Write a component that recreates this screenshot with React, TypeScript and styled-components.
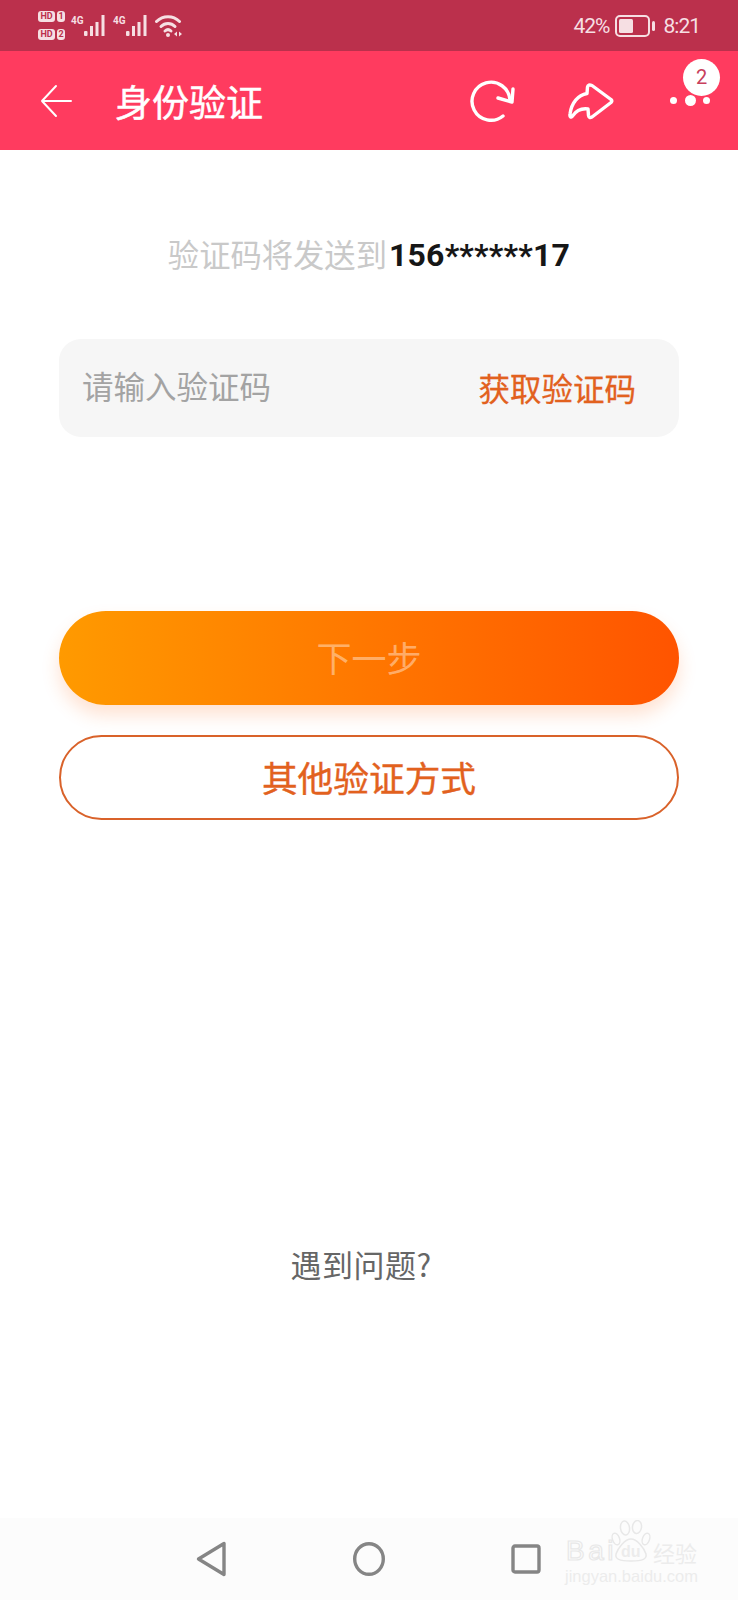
import styled, { createGlobalStyle } from 'styled-components';

const CJK = `'Noto Sans CJK SC', 'Noto Sans', sans-serif`;

const Global = createGlobalStyle`
  html, body {
    margin: 0;
    padding: 0;
    background: #fff;
    font-family: ${CJK};
  }
  * {
    box-sizing: border-box;
  }
`;

const St = {
  Page: styled.div`
    width: 738px;
    height: 1600px;
    display: flex;
    flex-direction: column;
    position: relative;
    overflow: hidden;
    background: #fff;
  `,

  StatusBar: styled.div`
    height: 51px;
    flex: none;
    background: #bb304c;
    display: flex;
    align-items: center;
    justify-content: space-between;
    padding: 0 38px;
    color: #f6dfe3;
  `,
  StatusLeft: styled.div`
    display: flex;
    align-items: center;
    height: 100%;
  `,
  SimColumn: styled.div`
    display: flex;
    flex-direction: column;
    gap: 6px;
    margin-right: 6px;
  `,
  SimRow: styled.div`
    display: flex;
    align-items: center;
    gap: 2px;
    height: 12px;
  `,
  SimTag: styled.span<{ $wide?: boolean }>`
    width: ${(p) => (p.$wide ? 17 : 8)}px;
    height: 11px;
    border-radius: 3px;
    background: #f6dfe3;
    color: #bb304c;
    font-family: Roboto, sans-serif;
    font-weight: 700;
    font-size: 9px;
    line-height: 11px;
    text-align: center;
  `,
  StatusRight: styled.div`
    display: flex;
    align-items: center;
    font-family: Roboto, sans-serif;
    font-size: 21px;
    letter-spacing: -1px;
    line-height: 26px;
  `,
  Percent: styled.span`
    margin-right: 5px;
  `,
  Clock: styled.span`
    margin-left: 8px;
  `,
  Network: styled.div`
    display: flex;
    align-items: flex-start;
    width: 36px;
    margin-right: 6px;
    svg {
      display: block;
    }
  `,
  NetworkLabel: styled.span`
    width: 13px;
    font-family: Roboto, sans-serif;
    font-weight: 700;
    font-size: 10px;
    line-height: 12px;
  `,

  Header: styled.div`
    height: 99px;
    flex: none;
    background: #ff3b5f;
    display: flex;
    align-items: center;
    color: #fff;
    padding-left: 40px;
  `,
  BackButton: styled.div`
    width: 32px;
    height: 34px;
    margin-right: 43px;
    svg {
      display: block;
    }
  `,
  Title: styled.div`
    font-size: 37px;
    -webkit-text-stroke: 0.5px #fff;
    line-height: 50px;
    width: 148px;
    margin-right: 207px;
    white-space: nowrap;
  `,
  IconButton: styled.div<{ $gap: number }>`
    margin-right: ${(p) => p.$gap}px;
    svg {
      display: block;
    }
  `,
  More: styled.div`
    position: relative;
    width: 40px;
    height: 12px;
    display: flex;
    align-items: center;
    justify-content: space-between;
    margin-left: 3px;
  `,
  Dot: styled.span<{ $big?: boolean }>`
    width: ${(p) => (p.$big ? 11 : 7)}px;
    height: ${(p) => (p.$big ? 11 : 7)}px;
    border-radius: 50%;
    background: #fff;
  `,
  Badge: styled.span`
    position: absolute;
    right: -10px;
    top: -36px;
    width: 37px;
    height: 37px;
    border-radius: 50%;
    background: #fff;
    color: #c8405c;
    font-family: Roboto, sans-serif;
    font-size: 20px;
    line-height: 37px;
    text-align: center;
  `,

  Main: styled.div`
    flex: 1;
    display: flex;
    flex-direction: column;
    padding: 85px 59px 0;
  `,
  Prompt: styled.div`
    height: 40px;
    display: flex;
    justify-content: center;
    align-items: center;
    font-size: 31.3px;
    color: #c9c9c9;
    white-space: nowrap;
  `,
  PromptLead: styled.span`
    padding-bottom: 4px;
  `,
  Phone: styled.span`
    margin-left: 2px;
    font-family: Roboto, sans-serif;
    font-weight: 700;
    font-size: 32px;
    letter-spacing: 0.2px;
    color: #161616;
  `,
  CodeField: styled.div`
    margin-top: 64px;
    height: 98px;
    background: #f6f6f6;
    border-radius: 22px;
    display: flex;
    align-items: center;
    justify-content: space-between;
    padding: 0 43px 6px 23px;
    font-size: 31.5px;
  `,
  Placeholder: styled.span`
    color: #a3a3a3;
  `,
  GetCode: styled.span`
    color: #e2611e;
    -webkit-text-stroke: 0.3px #e2611e;
    margin-top: 3px;
  `,
  NextButton: styled.div`
    margin-top: 174px;
    height: 94px;
    border-radius: 47px;
    background: linear-gradient(90deg, #ff9a00 0%, #ff5400 100%);
    box-shadow: 0 10px 18px rgba(255, 110, 30, 0.2);
    display: flex;
    align-items: center;
    justify-content: center;
    padding-bottom: 3px;
    font-size: 35px;
    color: rgba(255, 255, 255, 0.42);
  `,
  OtherButton: styled.div`
    margin-top: 30px;
    height: 85px;
    border-radius: 43px;
    border: 2px solid #d9622a;
    display: flex;
    align-items: center;
    justify-content: center;
    padding-bottom: 2px;
    font-size: 35.7px;
    color: #e2611e;
    -webkit-text-stroke: 0.4px #e2611e;
  `,
  Help: styled.div`
    margin-top: 424px;
    height: 40px;
    line-height: 40px;
    text-align: center;
    padding-right: 16px;
    font-size: 31px;
    letter-spacing: 0.5px;
    color: #666;
  `,

  NavBar: styled.div`
    height: 82px;
    flex: none;
    background: #fcfcfc;
    display: flex;
    align-items: center;
    padding-left: 196px;
    svg {
      display: block;
    }
  `,
  NavSlot: styled.div<{ $gap?: number }>`
    margin-right: ${(p) => p.$gap ?? 0}px;
  `,

  Watermark: styled.div`
    position: absolute;
    left: 565px;
    top: 1520px;
    width: 134px;
    height: 66px;
    color: #ececec;
    pointer-events: none;
  `,
  WatermarkBrand: styled.span`
    position: absolute;
    left: 1px;
    top: 13px;
    font-family: 'Liberation Sans', sans-serif;
    font-size: 28px;
    letter-spacing: 3.5px;
    line-height: 36px;
    white-space: nowrap;
    color: transparent;
    -webkit-text-stroke: 1.2px #e8e8e8;
  `,
  WatermarkDu: styled.span`
    position: absolute;
    left: 56px;
    top: 22px;
    font-family: 'Liberation Sans', sans-serif;
    font-weight: 700;
    font-size: 16px;
    line-height: 20px;
  `,
  WatermarkCn: styled.span`
    position: absolute;
    left: 88px;
    top: 17px;
    font-size: 22px;
    line-height: 30px;
    white-space: nowrap;
  `,
  WatermarkUrl: styled.div`
    position: absolute;
    left: 0;
    top: 46px;
    font-family: 'Liberation Sans', sans-serif;
    font-size: 16.5px;
    line-height: 20px;
    white-space: nowrap;
  `,
  Paw: styled.svg`
    position: absolute;
    left: 46px;
    top: 0;
  `,
};

const SignalBars = () => (
  <svg width="23" height="22" viewBox="0 0 23 22" fill="#f6dfe3">
    <rect x="0" y="16" width="3.5" height="5" rx="1" />
    <rect x="6" y="11" width="3" height="10" />
    <rect x="11.5" y="7" width="3" height="14" />
    <rect x="17.5" y="0" width="3" height="21" />
  </svg>
);

const Network = () => (
  <St.Network>
    <St.NetworkLabel>4G</St.NetworkLabel>
    <SignalBars />
  </St.Network>
);

const Wifi = () => (
  <svg width="28" height="24" viewBox="0 0 28 24" fill="none" stroke="#f6dfe3" strokeWidth="3" strokeLinecap="round">
    <path d="M1.5 7.5C8 1 18 1 24.5 7.5" />
    <path d="M6 12.5C10 8.5 16 8.5 20 12.5" />
    <path d="M10 17C11.8 15.4 14.2 15.4 16 17" />
    <circle cx="13" cy="21" r="2" fill="#f6dfe3" stroke="none" />
    <path d="M22 17.5v5l-3-2.5zM24 17.5v5l3-2.5z" fill="#f6dfe3" stroke="none" />
  </svg>
);

const Battery = () => (
  <svg width="41" height="22" viewBox="0 0 41 22" fill="none">
    <rect x="1" y="1" width="33" height="20" rx="4" stroke="#f6dfe3" strokeWidth="2" />
    <rect x="4" y="4" width="14" height="14" rx="1.5" fill="#f6dfe3" />
    <rect x="37" y="6" width="3" height="10" rx="1.5" fill="#f6dfe3" />
  </svg>
);

const BackArrow = () => (
  <svg width="32" height="34" viewBox="0 0 32 34" fill="none" stroke="#fff" strokeWidth="2" strokeLinecap="round" strokeLinejoin="round">
    <path d="M31 17H2M16 2L2 17l14 15" />
  </svg>
);

const RefreshIcon = () => (
  <svg width="46" height="44" viewBox="0 0 46 44" fill="none" stroke="#fff" strokeWidth="3.4" strokeLinecap="round" strokeLinejoin="round">
    <path d="M33 37A19 19 0 1 1 40 21" />
    <path d="M28 19l14 4 1-13" />
  </svg>
);

const ShareIcon = () => (
  <svg width="46" height="40" viewBox="0 0 46 40" fill="none" stroke="#fff" strokeWidth="3.4" strokeLinecap="round" strokeLinejoin="round">
    <path d="M24 4.5L43 18.5Q44.5 20 43 21.5L24 36Q21 37.5 20.5 34.5L20 28C13 27 8 30 4.5 35C3 37 1.5 36 2 33C3.5 22 10 14 19 12.5L19.5 6Q20 3 24 4.5Z" />
  </svg>
);

const NavBack = () => (
  <svg width="30" height="36" viewBox="0 0 30 36" fill="none" stroke="#858585" strokeWidth="3.4" strokeLinejoin="round">
    <path d="M28 2.5V33.5L2.5 18z" />
  </svg>
);

const NavHome = () => (
  <svg width="32" height="34" viewBox="0 0 32 34" fill="none" stroke="#858585" strokeWidth="3.4">
    <ellipse cx="16" cy="17" rx="14.3" ry="15.3" />
  </svg>
);

const NavRecent = () => (
  <svg width="30" height="30" viewBox="0 0 30 30" fill="none" stroke="#858585" strokeWidth="3.4" strokeLinejoin="round">
    <rect x="2" y="2" width="26" height="26" rx="2" />
  </svg>
);

const App = () => {
  return (
    <St.Page>
      <Global />
      <St.StatusBar>
        <St.StatusLeft>
          <St.SimColumn>
            <St.SimRow>
              <St.SimTag $wide>HD</St.SimTag>
              <St.SimTag>1</St.SimTag>
            </St.SimRow>
            <St.SimRow>
              <St.SimTag $wide>HD</St.SimTag>
              <St.SimTag>2</St.SimTag>
            </St.SimRow>
          </St.SimColumn>
          <Network />
          <Network />
          <Wifi />
        </St.StatusLeft>
        <St.StatusRight>
          <St.Percent>42%</St.Percent>
          <Battery />
          <St.Clock>8:21</St.Clock>
        </St.StatusRight>
      </St.StatusBar>

      <St.Header>
        <St.BackButton>
          <BackArrow />
        </St.BackButton>
        <St.Title>身份验证</St.Title>
        <St.IconButton $gap={52}>
          <RefreshIcon />
        </St.IconButton>
        <St.IconButton $gap={53}>
          <ShareIcon />
        </St.IconButton>
        <St.More>
          <St.Dot />
          <St.Dot $big />
          <St.Dot />
          <St.Badge>2</St.Badge>
        </St.More>
      </St.Header>

      <St.Main>
        <St.Prompt>
          <St.PromptLead>验证码将发送到</St.PromptLead>
          <St.Phone>156******17</St.Phone>
        </St.Prompt>
        <St.CodeField>
          <St.Placeholder>请输入验证码</St.Placeholder>
          <St.GetCode>获取验证码</St.GetCode>
        </St.CodeField>
        <St.NextButton>下一步</St.NextButton>
        <St.OtherButton>其他验证方式</St.OtherButton>
        <St.Help>遇到问题?</St.Help>
      </St.Main>

      <St.NavBar>
        <St.NavSlot $gap={127}>
          <NavBack />
        </St.NavSlot>
        <St.NavSlot $gap={126}>
          <NavHome />
        </St.NavSlot>
        <St.NavSlot>
          <NavRecent />
        </St.NavSlot>
      </St.NavBar>

      <St.Watermark>
        <St.Paw width="40" height="42" viewBox="0 0 40 42" fill="none" stroke="#e8e8e8" strokeWidth="1.5">
          <ellipse cx="5" cy="19" rx="3.5" ry="6" transform="rotate(-20 5 19)" />
          <ellipse cx="14" cy="8" rx="4.5" ry="7" transform="rotate(-8 14 8)" />
          <ellipse cx="26" cy="7" rx="4.5" ry="6.5" transform="rotate(8 26 7)" />
          <ellipse cx="35" cy="19" rx="3.5" ry="6" transform="rotate(20 35 19)" />
          <path d="M20 19c6 0 13 9 15 15 1 5-3 7-15 7S4 39 5 34c2-6 9-15 15-15z" />
        </St.Paw>
        <St.WatermarkBrand>Bai</St.WatermarkBrand>
        <St.WatermarkDu>du</St.WatermarkDu>
        <St.WatermarkCn>经验</St.WatermarkCn>
        <St.WatermarkUrl>jingyan.baidu.com</St.WatermarkUrl>
      </St.Watermark>
    </St.Page>
  );
};

export default App;
